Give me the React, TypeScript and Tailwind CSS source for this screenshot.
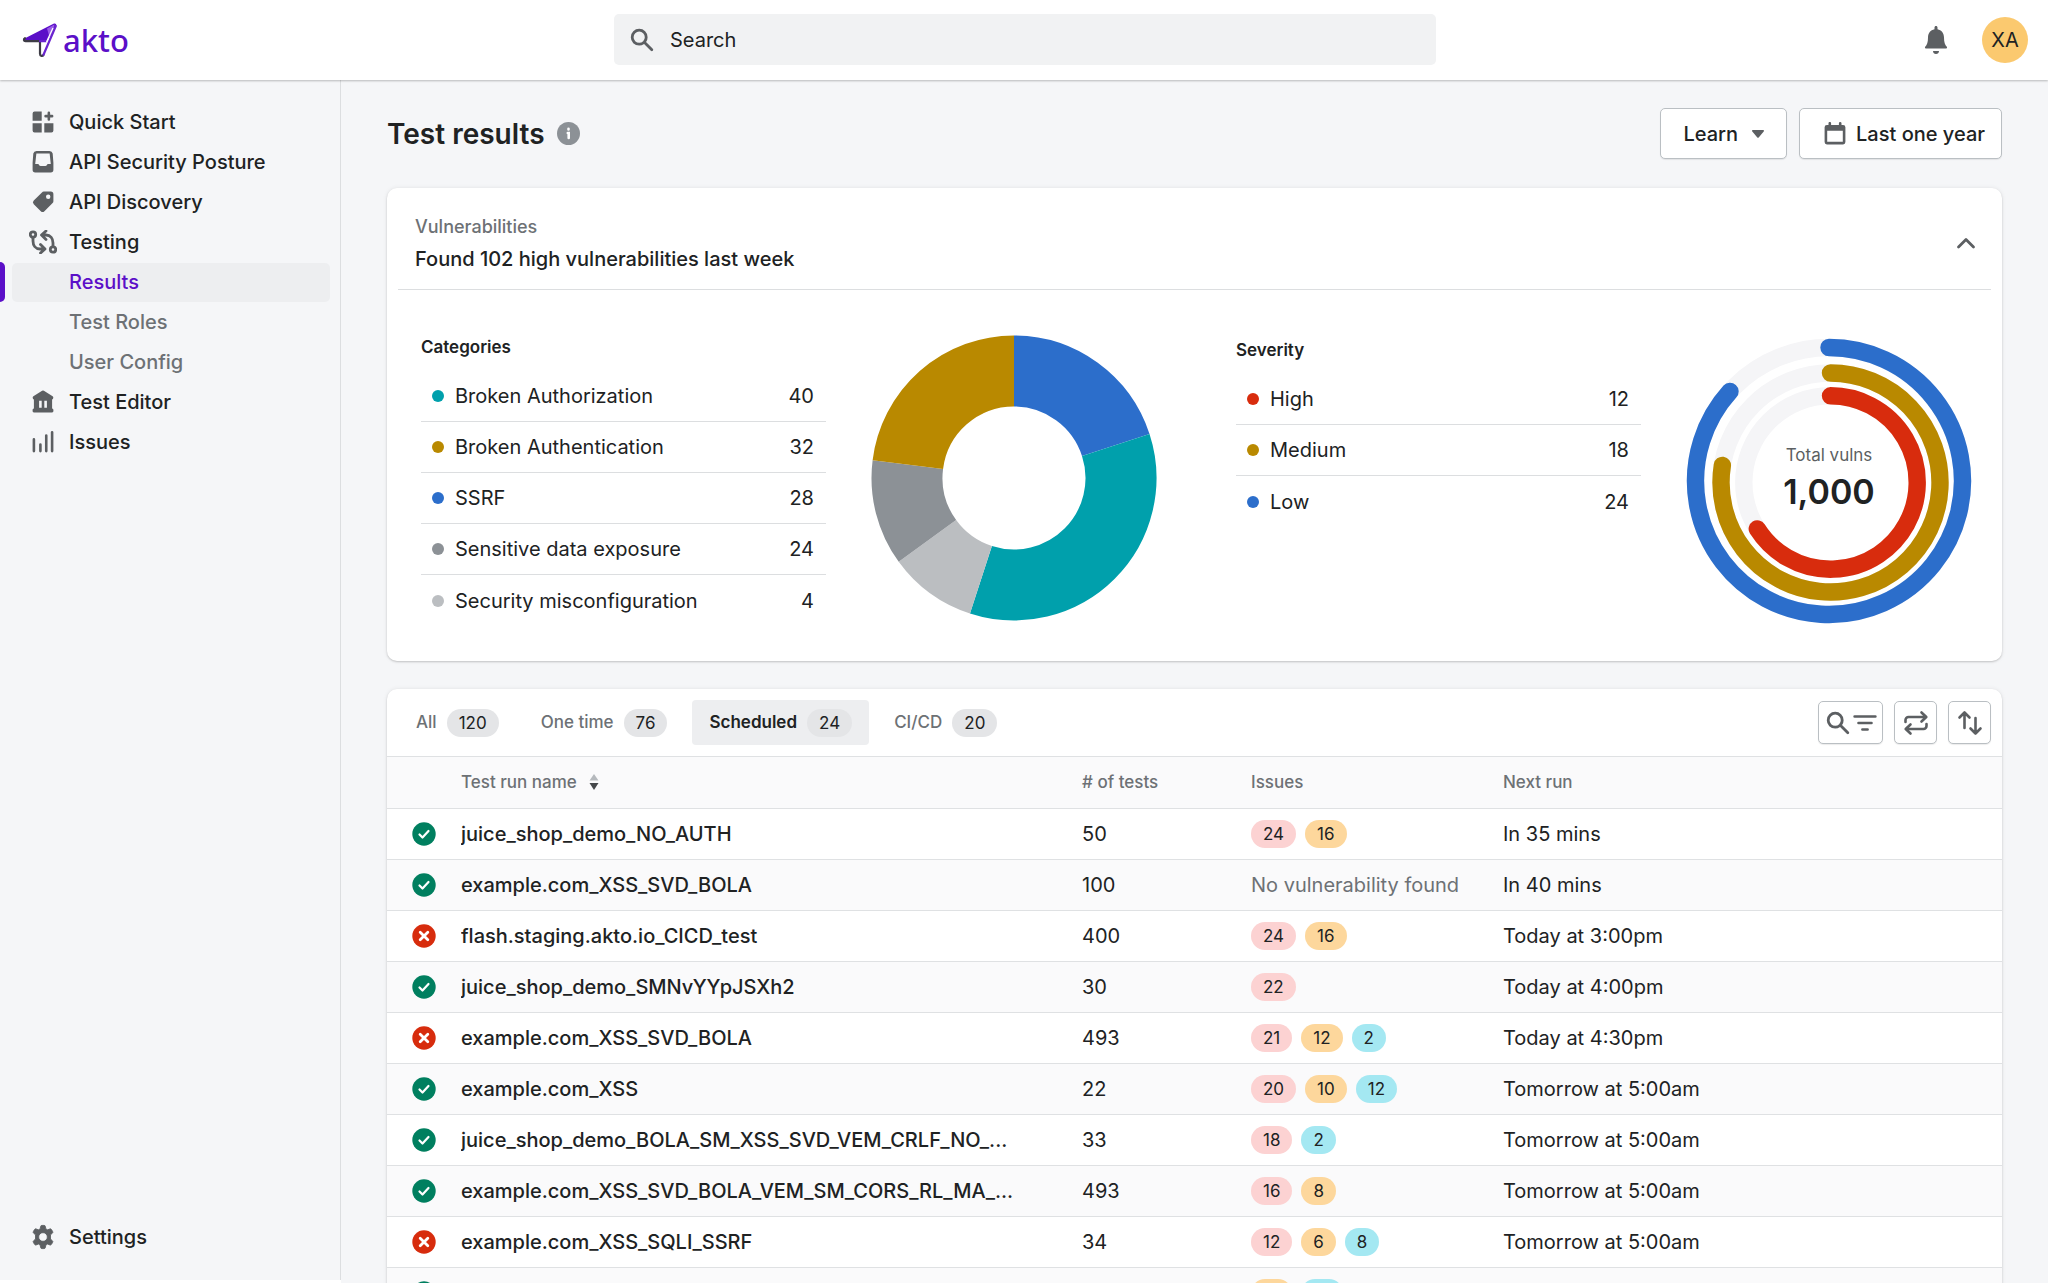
import type { ReactNode } from "react";

const strokeProps = {
  fill: "none",
  stroke: "currentColor",
  strokeLinecap: "round" as const,
  strokeLinejoin: "round" as const,
};

function Icon({ children, className = "size-[26px]" }: { children: ReactNode; className?: string }) {
  return (
    <svg viewBox="0 0 20 20" fill="currentColor" aria-hidden="true" className={`${className} shrink-0`}>
      {children}
    </svg>
  );
}

const searchPath =
  "M8 12a4 4 0 1 1 0-8 4 4 0 0 1 0 8zm9.707 4.293-4.82-4.82A5.968 5.968 0 0 0 14 8 6 6 0 0 0 2 8a6 6 0 0 0 6 6 5.968 5.968 0 0 0 3.473-1.113l4.82 4.82a.997.997 0 0 0 1.414 0 .999.999 0 0 0 0-1.414z";

function QuickStartIcon() {
  return (
    <Icon>
      <path d="M3.5 2H9v7H2V3.5A1.5 1.5 0 0 1 3.5 2zM2 11h7v7H3.500A1.500 1.500 0 0 1 2 16.500zM11 11h7v5.500a1.500 1.500 0 0 1-1.500 1.500H11z" />
      <path {...strokeProps} strokeWidth="2" d="M14.500 3v5M12 5.500h5" />
    </Icon>
  );
}

function InboxIcon() {
  return (
    <Icon>
      <path
        fillRule="evenodd"
        d="M5 1.500h10a2.500 2.500 0 0 1 2.450 2l.55 7V16a2 2 0 0 1-2 2H4a2 2 0 0 1-2-2v-5.500l.55-7A2.500 2.500 0 0 1 5 1.500zM4.900 3.500 4 11.500h2.200c.6 0 .8 1.500 2 1.500h3.600c1.200 0 1.400-1.500 2-1.500H16l-.9-8z"
      />
    </Icon>
  );
}

function TagIcon() {
  return (
    <Icon>
      <path
        fillRule="evenodd"
        d="M10.600 2H16a2 2 0 0 1 2 2v5.400a2 2 0 0 1-.6 1.400l-6.300 6.300a2 2 0 0 1-2.800 0l-5.400-5.400a2 2 0 0 1 0-2.800L9.200 2.600A2 2 0 0 1 10.600 2zM14 7.700a1.700 1.700 0 1 0 0-3.400 1.700 1.700 0 0 0 0 3.400z"
      />
    </Icon>
  );
}

function TestingIcon() {
  return (
    <svg viewBox="0 0 28 24" aria-hidden="true" className="h-6 w-7 shrink-0" {...strokeProps} strokeWidth="2.800">
      <circle cx="4" cy="4.500" r="2.700" />
      <path d="M4 7.500v3.500c0 4.500 2.500 8 7 8h4.500M11.500 14.500l4.500 4.500-4.500 4" />
      <circle cx="24" cy="19.500" r="2.700" />
      <path d="M24 16.500V13c0-4.500-2.500-8-7-8h-3.500M17 1l-4.500 4 4.500 4.500" />
    </svg>
  );
}

function BankIcon() {
  return (
    <Icon>
      <path
        fillRule="evenodd"
        d="M9.300 1.300a1.300 1.300 0 0 1 1.400 0l6.700 4.200c.9.600.6 2.300-.4 2.500V15c.7 0 1 .6 1 1.200v.8c0 .6-.4 1-1 1H3c-.6 0-1-.4-1-1v-.8C2 15.600 2.300 15 3 15V8c-1-.2-1.300-1.900-.4-2.500zM7 9v5.500h2V9zM11 9v5.500h2V9z"
      />
    </Icon>
  );
}

function BarsIcon() {
  return (
    <Icon>
      <path {...strokeProps} strokeWidth="2" d="M3 8v9M8 12v5M12.500 5v12M17 2.500V17" />
    </Icon>
  );
}

function GearIcon() {
  return (
    <svg viewBox="0 0 24 24" fill="currentColor" aria-hidden="true" className="size-[26px] shrink-0">
      <path
        fillRule="evenodd"
        stroke="currentColor"
        strokeWidth=".8"
        d="M9.800 2.300a1.200 1.200 0 0 1 1.200-1h2a1.200 1.200 0 0 1 1.200 1l.4 2.200 1.600.9 2.100-.8a1.200 1.200 0 0 1 1.500.5l1.100 1.900a1.200 1.200 0 0 1-.3 1.500L18.900 10v3.900l1.700 1.500a1.200 1.200 0 0 1 .3 1.500l-1.100 1.900a1.200 1.200 0 0 1-1.500.5l-2.100-.8-1.600.9-.4 2.300a1.200 1.200 0 0 1-1.200 1h-2a1.200 1.200 0 0 1-1.200-1l-.4-2.300-1.600-.9-2.100.8a1.200 1.200 0 0 1-1.500-.5l-1.100-1.900a1.200 1.200 0 0 1 .3-1.500L5.100 13.900V10L3.400 8.500a1.200 1.200 0 0 1-.3-1.500l1.100-1.900a1.200 1.200 0 0 1 1.500-.5l2.100.8 1.600-.9zM12 16a4 4 0 1 0 0-8 4 4 0 0 0 0 8z"
      />
    </svg>
  );
}

function Logo() {
  return (
    <a href="#home" className="flex items-center gap-[5px] text-[#5b0fc8]">
      <svg viewBox="0 0 36 36" className="size-9" aria-hidden="true">
        <path d="M2.500 16.500 31.500 1.800c1.800-.7 3.100.3 2.700 2L24.500 19l-5.500-.5-16.500-.5z" fill="#5b0fc8" />
        <path d="M25 6.500 32.500 2.500 31 10l-3.500 5z" fill="#9a5ce6" />
        <path d="M3 16.200c-1.700 1-1.300 3 .5 3h14.500v12.500c0 2.500 2.600 3 3.500 1" fill="none" stroke="#3d3c45" strokeWidth="2.200" strokeLinecap="round" strokeLinejoin="round" />
        <path d="M21.500 32.700 33.800 4M18 19.200h6" fill="none" stroke="#6a24cf" strokeWidth="2.200" strokeLinecap="round" />
        <path d="M31 6 24.500 20" fill="none" stroke="#fff" strokeWidth="1.300" />
      </svg>
      <span className="font-['Noto_Sans'] text-[31px] leading-10 font-medium">akto</span>
    </a>
  );
}

function Header() {
  return (
    <header className="relative z-10 grid h-20 shrink-0 grid-cols-[1fr_822px_1fr] items-center bg-white pr-5 pb-px pl-[22px] shadow-[0_1px_2px_rgba(0,0,0,0.25)]">
      <Logo />
      <label className="flex h-[51px] items-center gap-[14px] rounded-[5px] bg-[#f1f2f3] px-[14px] text-[#5c5f62]">
        <Icon className="size-7">
          <path d={searchPath} />
        </Icon>
        <input
          type="search"
          placeholder="Search"
          aria-label="Search"
          className="w-full bg-transparent text-xl text-[#202223] outline-none placeholder:text-[#202223]"
        />
      </label>
      <div className="flex items-center justify-end gap-[34px]">
        <button type="button" aria-label="Notifications" className="text-[#5c5f62]">
          <svg viewBox="0 0 24 28" fill="currentColor" className="h-7 w-6">
            <path d="M12 0c.9 0 1.500.6 1.500 1.500v1.700c4 .7 6.500 4 6.500 8.300 0 5 1 7.500 2.800 9.300.5.600.3 1.700-.6 1.700H1.800c-.9 0-1.100-1.100-.6-1.700C3 19 4 16.500 4 11.500c0-4.300 2.500-7.600 6.500-8.300V1.500C10.500.6 11.100 0 12 0zM9 25h6c0 1.700-1.300 3-3 3s-3-1.300-3-3z" />
          </svg>
        </button>
        <button type="button" className="size-[46px] rounded-full bg-[#fbc96f] text-xl text-[#202223]">
          XA
        </button>
      </div>
    </header>
  );
}

type NavEntry = { label: string; icon?: ReactNode; kind?: "active" | "muted" };

const navEntries: NavEntry[] = [
  { label: "Quick Start", icon: <QuickStartIcon /> },
  { label: "API Security Posture", icon: <InboxIcon /> },
  { label: "API Discovery", icon: <TagIcon /> },
  { label: "Testing", icon: <TestingIcon /> },
  { label: "Results", kind: "active" },
  { label: "Test Roles", kind: "muted" },
  { label: "User Config", kind: "muted" },
  { label: "Test Editor", icon: <BankIcon /> },
  { label: "Issues", icon: <BarsIcon /> },
];

function NavItem({ label, icon, kind }: NavEntry) {
  const tone = kind === "active" ? "bg-[#edeef0] text-[#5b0fc8]" : kind === "muted" ? "text-[#6d7175]" : "text-[#202223]";
  return (
    <li className="flex h-10 items-center">
      <span className={kind === "active" ? "h-10 w-[5px] rounded-r-[5px] bg-[#5b0fc8]" : "w-[5px]"} />
      <a href={`#${label}`} className={`mr-[10px] ml-[7px] flex h-[39px] flex-1 items-center rounded-[5px] pl-[17px] text-xl font-medium ${tone}`}>
        <span className="mr-3 flex w-7 justify-center text-[#5c5f62]">{icon}</span>
        {label}
      </a>
    </li>
  );
}

function Sidebar() {
  return (
    <nav className="mb-[3px] flex w-[341px] shrink-0 flex-col justify-between border-r border-[#dcdee0] bg-[#f5f6f8] pt-[22px] pb-[23px]">
      <ul>
        {navEntries.map((entry) => (
          <NavItem key={entry.label} {...entry} />
        ))}
      </ul>
      <ul>
        <NavItem label="Settings" icon={<GearIcon />} />
      </ul>
    </nav>
  );
}

function PageTitle() {
  const button = "flex h-[51px] items-center rounded-[5px] border border-[#babfc3] bg-white text-xl font-medium shadow-[0_1px_1px_rgba(0,0,0,0.08)]";
  return (
    <div className="flex items-center justify-between">
      <h1 className="flex items-center gap-3 text-[28px] leading-9 font-semibold">
        Test results
        <svg viewBox="0 0 23 23" className="size-[23px]" aria-hidden="true">
          <circle cx="11.500" cy="11.500" r="11.500" fill="#8c9196" />
          <path d="M11.500 6.800v.6M10.800 11h.9v5" stroke="#fff" strokeWidth="2.600" strokeLinecap="round" fill="none" />
        </svg>
      </h1>
      <div className="flex gap-3">
        <button type="button" className={`${button} gap-[14px] px-[22px]`}>
          Learn
          <svg viewBox="0 0 12 8" className="h-2 w-3 text-[#5c5f62]" fill="currentColor" aria-hidden="true">
            <path d="M1 0h10c.9 0 1.300 1 .7 1.600L6.700 7.500a1 1 0 0 1-1.400 0L.3 1.600C-.3 1 .1 0 1 0z" />
          </svg>
        </button>
        <button type="button" className={`${button} gap-2 pr-4 pl-[22px]`}>
          <Icon className="size-[26px] text-[#5c5f62]">
            <path fillRule="evenodd" d="M6 .8c.6 0 1 .4 1 1V3h6V1.800a1 1 0 1 1 2 0V3h1.200A1.800 1.800 0 0 1 18 4.800v11.400a1.800 1.800 0 0 1-1.800 1.800H3.800A1.800 1.800 0 0 1 2 16.200V4.800A1.800 1.800 0 0 1 3.800 3H5V1.800c0-.6.400-1 1-1zM4 7.500V16h12V7.500z" />
          </Icon>
          Last one year
        </button>
      </div>
    </div>
  );
}

type LegendRow = { label: string; value: number; color: string };

const categories: LegendRow[] = [
  { label: "Broken Authorization", value: 40, color: "#00a0ac" },
  { label: "Broken Authentication", value: 32, color: "#b98900" },
  { label: "SSRF", value: 28, color: "#2c6ecb" },
  { label: "Sensitive data exposure", value: 24, color: "#8c9196" },
  { label: "Security misconfiguration", value: 4, color: "#bbbec1" },
];

const severities: LegendRow[] = [
  { label: "High", value: 12, color: "#d82c0d" },
  { label: "Medium", value: 18, color: "#b98900" },
  { label: "Low", value: 24, color: "#2c6ecb" },
];

function Legend({ title, rows }: { title: string; rows: LegendRow[] }) {
  return (
    <section className="flex-1">
      <h3 className="text-[17px] leading-6 font-semibold">{title}</h3>
      <ul className="mt-3">
        {rows.map((row, i) => (
          <li
            key={row.label}
            className={`flex h-[51px] items-center pr-3 pl-[11px] text-xl ${i < rows.length - 1 ? "border-b border-[#dcdee0]" : ""}`}
          >
            <span className="mr-[11px] size-3 rounded-full" style={{ backgroundColor: row.color }} />
            <span className="flex-1">{row.label}</span>
            <span>{row.value}</span>
          </li>
        ))}
      </ul>
    </section>
  );
}

const donutSlices = [
  { from: 0, to: 0.2, color: "#2c6ecb" },
  { from: 0.2, to: 0.55, color: "#00a0ac" },
  { from: 0.55, to: 0.65, color: "#bbbec1" },
  { from: 0.65, to: 0.77, color: "#8c9196" },
  { from: 0.77, to: 1, color: "#b98900" },
];

function point(radius: number, turn: number) {
  const angle = turn * 2 * Math.PI;
  return `${(radius * Math.sin(angle)).toFixed(2)} ${(-radius * Math.cos(angle)).toFixed(2)}`;
}

function arc(radius: number, from: number, to: number) {
  return `M${point(radius, from)}A${radius} ${radius} 0 ${to - from > 0.5 ? 1 : 0} 1 ${point(radius, to)}`;
}

function Donut() {
  return (
    <svg viewBox="-143 -143 286 286" className="size-[286px] shrink-0" role="img" aria-label="Vulnerabilities by category">
      {donutSlices.map((slice) => (
        <path key={slice.color} d={arc(107, slice.from, slice.to)} stroke={slice.color} strokeWidth="71" fill="none" />
      ))}
    </svg>
  );
}

const rings = [
  { radius: 133.5, share: 0.867, color: "#2c6ecb", shift: 0 },
  { radius: 109.5, share: 0.775, color: "#b98900", shift: 1.5 },
  { radius: 86.7, share: 0.66, color: "#d82c0d", shift: 1.5 },
];

function Rings() {
  return (
    <div className="grid shrink-0 place-items-center">
      <svg viewBox="-143 -143 286 286" className="col-start-1 row-start-1 size-[286px]" role="img" aria-label="Vulnerabilities by severity">
        {rings.map((ring) => (
          <g key={ring.color} transform={`translate(${ring.shift} ${ring.shift})`} fill="none" strokeWidth="17.400">
            <circle r={ring.radius} stroke="#f5f5f7" />
            <path d={arc(ring.radius, 0, ring.share)} stroke={ring.color} strokeLinecap="round" />
          </g>
        ))}
      </svg>
      <div className="col-start-1 row-start-1 pb-1.5 text-center">
        <p className="text-[17px] leading-7 text-[#5c5f62]">Total vulns</p>
        <p className="text-[34px] leading-[46px] font-semibold">1,000</p>
      </div>
    </div>
  );
}

const cardShadow = "shadow-[0_0_5px_rgba(23,24,24,0.07),0_1px_2px_rgba(0,0,0,0.18)]";

function VulnerabilitiesCard() {
  return (
    <section className={`mt-[29px] rounded-[10px] bg-white pb-[35px] ${cardShadow}`}>
      <div className="mx-[11px] flex h-[102px] items-center justify-between border-b border-[#dcdee0] pt-[9px] pr-[11px] pl-[17px]">
        <div>
          <h2 className="text-[18px] leading-8 font-medium text-[#6d7175]">Vulnerabilities</h2>
          <p className="text-xl leading-8 font-medium">Found 102 high vulnerabilities last week</p>
        </div>
        <button type="button" aria-label="Collapse" className="text-[#5c5f62]">
          <svg viewBox="0 0 28 28" className="size-7" {...strokeProps} strokeWidth="2.800">
            <path d="m6.500 18 7.500-7.500 7.500 7.500" />
          </svg>
        </button>
      </div>
      <div className="flex items-start pt-[45px] pr-[30px] pl-[34px]">
        <div className="flex flex-1 items-start gap-[45px]">
          <Legend title="Categories" rows={categories} />
          <Donut />
        </div>
        <div className="ml-[79px] flex flex-1 items-start gap-[45px] pt-[3px]">
          <Legend title="Severity" rows={severities} />
          <Rings />
        </div>
      </div>
    </section>
  );
}

const tabs = [
  { label: "All", count: 120 },
  { label: "One time", count: 76 },
  { label: "Scheduled", count: 24, selected: true },
  { label: "CI/CD", count: 20 },
];

function Toolbar() {
  const button = "flex h-[43px] items-center justify-center rounded-[5px] border border-[#babfc3] bg-white text-[#5c5f62] shadow-[0_1px_1px_rgba(0,0,0,0.08)]";
  return (
    <div className="flex h-[68px] items-center justify-between border-b border-[#dfe1e3] pr-[11px] pl-3">
      <div role="tablist" className="flex gap-2">
        {tabs.map((tab) => (
          <button
            key={tab.label}
            type="button"
            role="tab"
            aria-selected={!!tab.selected}
            className={`flex h-[45px] items-center gap-[10px] rounded-[4px] px-[17px] text-[17px] ${
              tab.selected ? "bg-[#edeef0] font-semibold text-[#202223]" : "font-medium text-[#6d7175]"
            }`}
          >
            {tab.label}
            <span className="rounded-full bg-[#e4e5e7] px-3 text-[17px] leading-7 font-normal text-[#202223]">{tab.count}</span>
          </button>
        ))}
      </div>
      <div className="flex gap-[11px]">
        <button type="button" aria-label="Search and filter" className={`${button} w-[65px]`}>
          <Icon className="size-7">
            <path d={searchPath} />
          </Icon>
          <Icon className="size-[26px]">
            <path {...strokeProps} strokeWidth="2" d="M2 5h16M5 10h10M8 15h4" />
          </Icon>
        </button>
        <button type="button" aria-label="Switch view" className={`${button} w-[43px]`}>
          <svg viewBox="0 0 26 26" className="size-[26px]" {...strokeProps} strokeWidth="2.600">
            <path d="M2.500 12V10a3 3 0 0 1 3-3H23M18.500 2.500 23.300 7l-4.800 4.500M23.500 14v2a3 3 0 0 1-3 3H3M7.500 14.500 2.700 19l4.800 4.500" />
          </svg>
        </button>
        <button type="button" aria-label="Sort" className={`${button} w-[43px]`}>
          <svg viewBox="0 0 26 26" className="size-[26px]" {...strokeProps} strokeWidth="2.600">
            <path d="M7.500 18V3M2.500 7.500 7.500 2.500l5 5M18.500 8v15.500M13.500 18.500l5 5 5-5" />
          </svg>
        </button>
      </div>
    </div>
  );
}

type Run = { ok: boolean; name: string; tests: number; issues: [number, string][]; next: string };

const H = "bg-[#fcd2d2]";
const M = "bg-[#fdd79c]";
const L = "bg-[#a4e8f2]";

const runs: Run[] = [
  { ok: true, name: "juice_shop_demo_NO_AUTH", tests: 50, issues: [[24, H], [16, M]], next: "In 35 mins" },
  { ok: true, name: "example.com_XSS_SVD_BOLA", tests: 100, issues: [], next: "In 40 mins" },
  { ok: false, name: "flash.staging.akto.io_CICD_test", tests: 400, issues: [[24, H], [16, M]], next: "Today at 3:00pm" },
  { ok: true, name: "juice_shop_demo_SMNvYYpJSXh2", tests: 30, issues: [[22, H]], next: "Today at 4:00pm" },
  { ok: false, name: "example.com_XSS_SVD_BOLA", tests: 493, issues: [[21, H], [12, M], [2, L]], next: "Today at 4:30pm" },
  { ok: true, name: "example.com_XSS", tests: 22, issues: [[20, H], [10, M], [12, L]], next: "Tomorrow at 5:00am" },
  { ok: true, name: "juice_shop_demo_BOLA_SM_XSS_SVD_VEM_CRLF_NO_...", tests: 33, issues: [[18, H], [2, L]], next: "Tomorrow at 5:00am" },
  { ok: true, name: "example.com_XSS_SVD_BOLA_VEM_SM_CORS_RL_MA_...", tests: 493, issues: [[16, H], [8, M]], next: "Tomorrow at 5:00am" },
  { ok: false, name: "example.com_XSS_SQLI_SSRF", tests: 34, issues: [[12, H], [6, M], [8, L]], next: "Tomorrow at 5:00am" },
  { ok: true, name: "example.com_XSS", tests: 22, issues: [[16, M], [12, L]], next: "Tomorrow at 5:00am" },
];

function StatusIcon({ ok }: { ok: boolean }) {
  return (
    <svg viewBox="0 0 24 24" className="mx-auto size-6" role="img" aria-label={ok ? "Passed" : "Failed"}>
      <circle cx="12" cy="12" r="11.700" fill={ok ? "#007f5f" : "#d72c0d"} />
      <path
        d={ok ? "m7.500 12.500 3 3 6-6.500" : "m8.200 8.200 7.600 7.600m0-7.600-7.600 7.600"}
        fill="none"
        stroke="#fff"
        strokeWidth={ok ? 2.2 : 2.8}
        strokeLinecap="round"
        strokeLinejoin="round"
      />
    </svg>
  );
}

function ResultsCard() {
  return (
    <section className={`mt-7 rounded-t-[10px] bg-white ${cardShadow}`}>
      <Toolbar />
      <table className="w-full table-fixed border-collapse text-left">
        <colgroup>
          <col className="w-[74px]" />
          <col className="w-[621px]" />
          <col className="w-[169px]" />
          <col className="w-[252px]" />
          <col />
        </colgroup>
        <thead>
          <tr className="h-[51px] border-b border-[#dfe1e3] bg-[#fafafb] text-[17px] text-[#6d7175]">
            <th aria-label="Status" />
            <th className="font-medium">
              <button type="button" className="flex items-center gap-3">
                Test run name
                <svg viewBox="0 0 10 16" className="h-4 w-[10px]" aria-hidden="true">
                  <path d="M5 0 9.500 6.500h-9z" fill="#b5b9bd" />
                  <path d="M5 16 .5 9h9z" fill="#44474a" />
                </svg>
              </button>
            </th>
            <th className="font-medium"># of tests</th>
            <th className="font-medium">Issues</th>
            <th className="font-medium">Next run</th>
          </tr>
        </thead>
        <tbody>
          {runs.map((run, i) => (
            <tr key={i} className="h-[51px] border-b border-[#dfe1e3] text-xl even:bg-[#fafafb]">
              <td>
                <StatusIcon ok={run.ok} />
              </td>
              <td className="truncate font-medium">{run.name}</td>
              <td>{run.tests}</td>
              <td>
                {run.issues.length ? (
                  <div className="flex gap-[9px]">
                    {run.issues.map(([count, color]) => (
                      <span key={color} className={`rounded-full px-3 text-[17px] leading-7 ${color}`}>
                        {count}
                      </span>
                    ))}
                  </div>
                ) : (
                  <span className="text-[#6d7175]">No vulnerability found</span>
                )}
              </td>
              <td>{run.next}</td>
            </tr>
          ))}
        </tbody>
      </table>
    </section>
  );
}

export default function App() {
  return (
    <div className="flex h-screen flex-col overflow-hidden bg-white font-['Inter',sans-serif] text-[#202223]">
      <Header />
      <div className="flex min-h-0 flex-1">
        <Sidebar />
        <main className="min-w-0 flex-1 overflow-hidden bg-[#f5f6f8] pt-7 pr-[46px] pl-[46px]">
          <PageTitle />
          <VulnerabilitiesCard />
          <ResultsCard />
        </main>
      </div>
    </div>
  );
}
